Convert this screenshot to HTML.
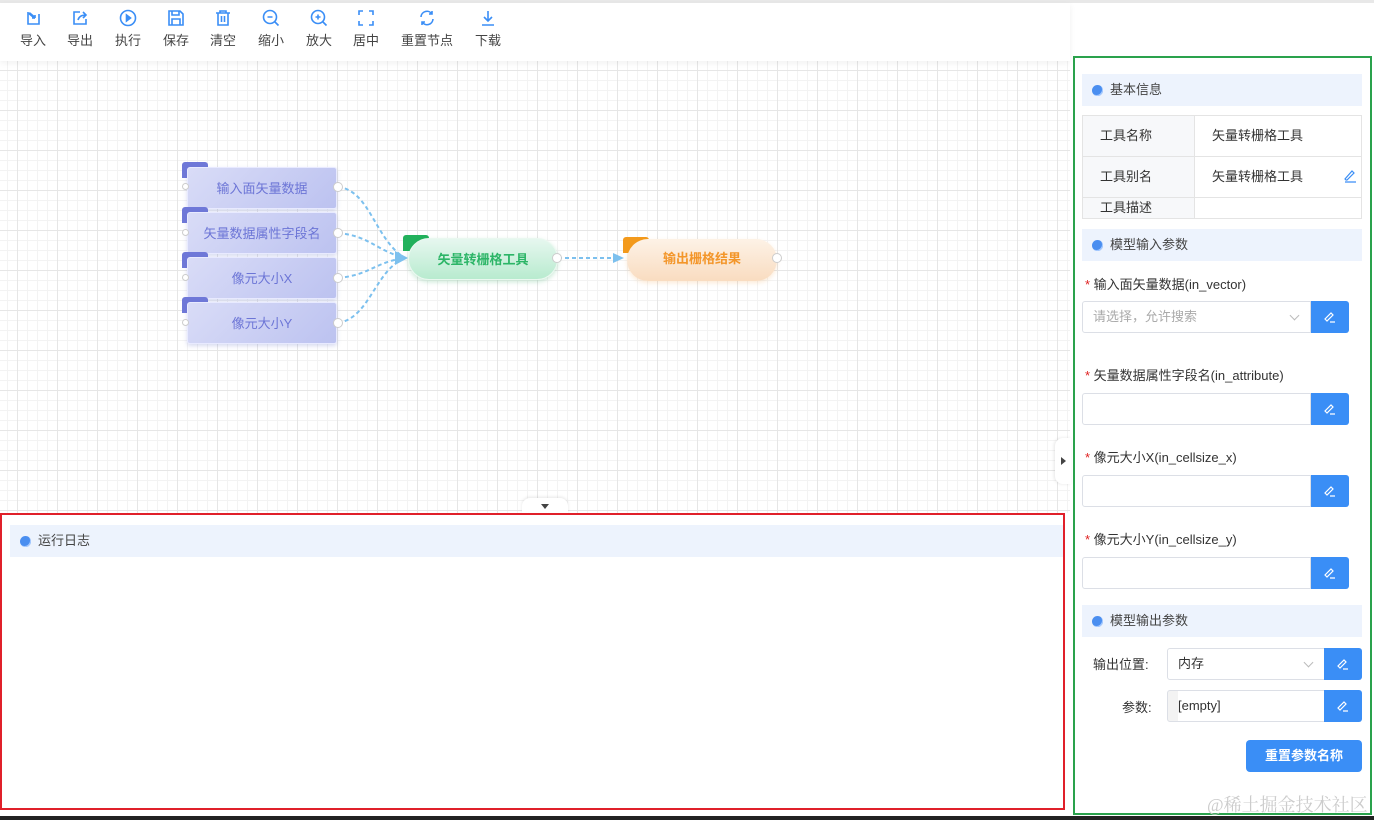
<!DOCTYPE html>
<html><head><meta charset="utf-8">
<style>
*{box-sizing:border-box;margin:0;padding:0}
body{width:1374px;height:820px;overflow:hidden;background:#fff;font-family:"Liberation Sans","Noto Sans CJK SC",sans-serif;color:#333;position:relative}
.top{position:absolute;left:0;top:0;width:1374px;height:3px;background:#e8e8e8}
.toolbar{position:absolute;left:0;top:3px;width:1070px;height:58px;background:#fff;box-shadow:0 2px 6px rgba(0,0,0,.06);z-index:2}
.tb{position:absolute;top:6px;text-align:center;font-size:13px;color:#444}
.tb svg{display:block;margin:0 auto 3px;width:18px;height:18px}
.canvas{position:absolute;left:0;top:61px;width:1070px;height:452px;
background-color:#fff;
background-image:linear-gradient(#e6e6e6 1px,transparent 1px),linear-gradient(90deg,#e6e6e6 1px,transparent 1px),linear-gradient(#f3f3f3 1px,transparent 1px),linear-gradient(90deg,#f3f3f3 1px,transparent 1px);
background-size:40px 40px,40px 40px,10px 10px,10px 10px;background-position:17px 9px,17px 9px,17px 9px,17px 9px}
.node{position:absolute;width:150px;height:42px;border-radius:3px;background:linear-gradient(135deg,#d9dcf7,#bcc2f0);color:#6c75d6;font-size:13px;text-align:center;line-height:42px;border:1px solid #e8eaff;box-shadow:0 2px 4px rgba(100,110,200,.25)}
.tag{position:absolute;width:26px;height:16px;border-radius:3px 3px 0 0}
.dot{position:absolute;width:10px;height:10px;border-radius:50%;background:#fff;border:1px solid #ccc}
.log{position:absolute;left:0;top:513px;width:1065px;height:297px;border:2px solid #e0202a}
.hdr{height:32px;background:#edf3fd;font-size:13px;color:#444;line-height:32px;padding-left:28px;position:relative}
.hdr:before{content:"";position:absolute;left:10px;top:11px;width:11px;height:11px;border-radius:50%;background:#4a8ef0;box-shadow:-1px -1px 0 #a8cbff inset}
.panel{position:absolute;left:1073px;top:56px;width:299px;height:759px;border:2px solid #2aa24c;background:#fff}
.table{position:absolute;left:7px;top:57px;width:280px;border:1px solid #e4e4e4;font-size:13px}
.row{display:flex;border-bottom:1px solid #e4e4e4;position:relative}
.k{width:112px;background:#f7f8fa;padding-left:17px;border-right:1px solid #e4e4e4}
.v{padding-left:17px}
.lbl{position:absolute;left:10px;font-size:13px;color:#333}
.lbl b{color:#e02020;font-weight:normal}
.inp{position:absolute;left:7px;width:229px;height:32px;border:1px solid #dcdfe6;border-radius:3px 0 0 3px;font-size:13px;color:#aaa;line-height:30px;padding-left:10px;background:#fff}
.btn{position:absolute;width:38px;height:32px;background:#3a8ef6;border-radius:0 3px 3px 0}
.btn svg{position:absolute;left:12px;top:9px}
.chev{position:absolute;right:12px;top:10px;width:7px;height:7px;border-right:1px solid #bbb;border-bottom:1px solid #bbb;transform:rotate(45deg)}
</style></head><body>
<div class="top"></div>
<div class="toolbar">
<div class="tb" style="left:20px"><svg viewBox="0 0 18 18" fill="none" stroke="#3a8ef6" stroke-width="1.6"><path d="M4 3v12h11V5"/><path d="M5 4l6 5" stroke-width="2.5"/><path d="M11 9H8M11 9V6"/></svg>导入</div>
<div class="tb" style="left:67px"><svg viewBox="0 0 18 18" fill="none" stroke="#3a8ef6" stroke-width="1.6"><path d="M9 3H3v12h12V10"/><path d="M7 11c1-4 4-5 8-5M12 3l3 3-3 3"/></svg>导出</div>
<div class="tb" style="left:115px"><svg viewBox="0 0 18 18" fill="none" stroke="#3a8ef6" stroke-width="1.6"><circle cx="9" cy="9" r="7.5"/><path d="M7.5 6v6l4-3z" fill="#3a8ef6"/></svg>执行</div>
<div class="tb" style="left:163px"><svg viewBox="0 0 18 18" fill="none" stroke="#3a8ef6" stroke-width="1.6"><path d="M2 2h11l3 3v11H2z"/><path d="M5 2v4h7V2M5 16v-6h8v6"/></svg>保存</div>
<div class="tb" style="left:210px"><svg viewBox="0 0 18 18" fill="none" stroke="#3a8ef6" stroke-width="1.6"><path d="M2 4h14M6 4V2h6v2M4 4v12h10V4M7.5 7v6M10.5 7v6"/></svg>清空</div>
<div class="tb" style="left:258px"><svg viewBox="0 0 18 18" fill="none" stroke="#3a8ef6" stroke-width="1.6"><circle cx="8" cy="8" r="6.5"/><path d="M5.5 8h5M13 13l3.5 3.5"/></svg>缩小</div>
<div class="tb" style="left:306px"><svg viewBox="0 0 18 18" fill="none" stroke="#3a8ef6" stroke-width="1.6"><circle cx="8" cy="8" r="6.5"/><path d="M5.5 8h5M8 5.5v5M13 13l3.5 3.5"/></svg>放大</div>
<div class="tb" style="left:353px"><svg viewBox="0 0 18 18" fill="none" stroke="#3a8ef6" stroke-width="1.6"><path d="M2 6V2h4M12 2h4v4M16 12v4h-4M6 16H2v-4"/></svg>居中</div>
<div class="tb" style="left:401px"><svg viewBox="0 0 18 18" fill="none" stroke="#3a8ef6" stroke-width="1.6"><path d="M3 8a6 6 0 0 1 11-3M15 10a6 6 0 0 1-11 3M14 2v3h-3M4 16v-3h3"/></svg>重置节点</div>
<div class="tb" style="left:475px"><svg viewBox="0 0 18 18" fill="none" stroke="#3a8ef6" stroke-width="1.6"><path d="M9 2v10M5 8l4 4 4-4M3 16h12"/></svg>下载</div>
</div>
<div class="canvas"></div>
<svg style="position:absolute;left:0;top:0" width="1070" height="513">
<g fill="none" stroke="#7cc0ee" stroke-width="2" stroke-dasharray="4 3">
<path d="M338 187 C370 190,375 240,405 258"/>
<path d="M338 233 C370 236,375 250,405 258"/>
<path d="M338 278 C370 275,375 262,405 258"/>
<path d="M338 323 C370 318,375 270,405 258"/>
<path d="M558 258 L620 258"/>
</g>
<path d="M395 251 L408 258 L395 265 Z" fill="#7cc0ee"/>
<path d="M613 253 L624 258 L613 263 Z" fill="#7cc0ee"/>
</svg>
<div class="tag" style="left:182px;top:162px;background:#6f78d8"></div>
<div class="node" style="left:187px;top:167px">输入面矢量数据</div>
<div class="tag" style="left:182px;top:207px;background:#6f78d8"></div>
<div class="node" style="left:187px;top:212px">矢量数据属性字段名</div>
<div class="tag" style="left:182px;top:252px;background:#6f78d8"></div>
<div class="node" style="left:187px;top:257px">像元大小X</div>
<div class="tag" style="left:182px;top:297px;background:#6f78d8"></div>
<div class="node" style="left:187px;top:302px">像元大小Y</div>
<div class="dot" style="left:333px;top:182px"></div><div class="dot" style="left:333px;top:228px"></div><div class="dot" style="left:333px;top:273px"></div><div class="dot" style="left:333px;top:318px"></div>
<div class="dot" style="left:182px;top:183px;width:7px;height:7px"></div><div class="dot" style="left:182px;top:229px;width:7px;height:7px"></div><div class="dot" style="left:182px;top:274px;width:7px;height:7px"></div><div class="dot" style="left:182px;top:319px;width:7px;height:7px"></div>
<div class="tag" style="left:403px;top:235px;background:#22b15c"></div>
<div style="position:absolute;left:408px;top:238px;width:150px;height:42px;border-radius:21px;background:linear-gradient(180deg,#e6f7ef,#b8ebcf);border:1px solid #eaf8f0;color:#2cb567;font-size:13px;font-weight:bold;line-height:42px;text-align:center;box-shadow:0 2px 5px rgba(50,170,100,.25)">矢量转栅格工具</div>
<div class="dot" style="left:552px;top:253px"></div>
<div class="tag" style="left:623px;top:237px;background:#f39a1c"></div>
<div style="position:absolute;left:627px;top:239px;width:150px;height:42px;border-radius:21px;background:linear-gradient(180deg,#fdf2e6,#f9dcc0);color:#f3962a;font-size:13px;font-weight:bold;line-height:40px;text-align:center;box-shadow:0 2px 5px rgba(240,150,50,.2)">输出栅格结果</div>
<div class="dot" style="left:772px;top:253px"></div>
<div style="position:absolute;left:522px;top:498px;width:46px;height:16px;background:#fff;border-radius:8px 8px 0 0;box-shadow:0 -1px 3px rgba(0,0,0,.1)"><div style="position:absolute;left:19px;top:6px;border-left:4px solid transparent;border-right:4px solid transparent;border-top:5px solid #444"></div></div>
<div style="position:absolute;left:1055px;top:438px;width:16px;height:46px;background:#fff;border-radius:8px 0 0 8px;box-shadow:-1px 0 3px rgba(0,0,0,.1)"><div style="position:absolute;left:6px;top:19px;border-top:4px solid transparent;border-bottom:4px solid transparent;border-left:5px solid #444"></div></div>
<div class="log"><div class="hdr" style="margin:10px 0 0 8px;width:1053px">运行日志</div></div>
<div class="panel">
<div class="hdr" style="position:absolute;left:7px;top:16px;width:280px">基本信息</div>
<div class="table">
<div class="row" style="height:41px;line-height:40px"><div class="k">工具名称</div><div class="v">矢量转栅格工具</div></div>
<div class="row" style="height:41px;line-height:40px"><div class="k">工具别名</div><div class="v">矢量转栅格工具</div><svg style="position:absolute;right:4px;top:12px" width="14" height="14" viewBox="0 0 14 14" fill="none" stroke="#3a8ef6" stroke-width="1.2"><path d="M3 11l-1-1L9 2l2 2-7 7zM2 13h11"/></svg></div>
<div class="row" style="height:20px;line-height:20px;border-bottom:none"><div class="k">工具描述</div><div class="v"></div></div>
</div>
<div class="hdr" style="position:absolute;left:7px;top:171px;width:280px">模型输入参数</div>
<div class="lbl" style="top:216px"><b>*</b> 输入面矢量数据(in_vector)</div>
<div class="inp" style="top:243px">请选择，允许搜索<span class="chev"></span></div>
<div class="btn" style="left:236px;top:243px"><svg width="14" height="14" viewBox="0 0 14 14" fill="none" stroke="#fff" stroke-width="1.2"><path d="M3 10l-1-1L8 3l2 2-6 6zM7 12h5"/></svg></div>
<div class="lbl" style="top:307px"><b>*</b> 矢量数据属性字段名(in_attribute)</div>
<div class="inp" style="top:335px"></div>
<div class="btn" style="left:236px;top:335px"><svg width="14" height="14" viewBox="0 0 14 14" fill="none" stroke="#fff" stroke-width="1.2"><path d="M3 10l-1-1L8 3l2 2-6 6zM7 12h5"/></svg></div>
<div class="lbl" style="top:389px"><b>*</b> 像元大小X(in_cellsize_x)</div>
<div class="inp" style="top:417px"></div>
<div class="btn" style="left:236px;top:417px"><svg width="14" height="14" viewBox="0 0 14 14" fill="none" stroke="#fff" stroke-width="1.2"><path d="M3 10l-1-1L8 3l2 2-6 6zM7 12h5"/></svg></div>
<div class="lbl" style="top:471px"><b>*</b> 像元大小Y(in_cellsize_y)</div>
<div class="inp" style="top:499px"></div>
<div class="btn" style="left:236px;top:499px"><svg width="14" height="14" viewBox="0 0 14 14" fill="none" stroke="#fff" stroke-width="1.2"><path d="M3 10l-1-1L8 3l2 2-6 6zM7 12h5"/></svg></div>
<div class="hdr" style="position:absolute;left:7px;top:547px;width:280px">模型输出参数</div>
<div class="lbl" style="top:596px;left:18px">输出位置:</div>
<div class="inp" style="left:92px;top:590px;width:158px;color:#333">内存<span class="chev"></span></div>
<div class="btn" style="left:249px;top:590px"><svg width="14" height="14" viewBox="0 0 14 14" fill="none" stroke="#fff" stroke-width="1.2"><path d="M3 10l-1-1L8 3l2 2-6 6zM7 12h5"/></svg></div>
<div class="lbl" style="top:639px;left:47px">参数:</div>
<div class="inp" style="left:92px;top:632px;width:158px;color:#333;background:linear-gradient(90deg,#f3f3f3 10px,#fff 10px)">[empty]</div>
<div class="btn" style="left:249px;top:632px"><svg width="14" height="14" viewBox="0 0 14 14" fill="none" stroke="#fff" stroke-width="1.2"><path d="M3 10l-1-1L8 3l2 2-6 6zM7 12h5"/></svg></div>
<div style="position:absolute;left:171px;top:682px;width:116px;height:32px;background:#3a8ef6;border-radius:4px;color:#fff;font-size:13px;font-weight:bold;text-align:center;line-height:32px">重置参数名称</div>
<div style="position:absolute;left:132px;top:733px;font-size:18px;color:#ccc;font-family:'Liberation Serif','Noto Serif CJK SC',serif">@稀土掘金技术社区</div>
</div>
<div style="position:absolute;left:0;top:816px;width:1374px;height:4px;background:#222"></div>
</body></html>
